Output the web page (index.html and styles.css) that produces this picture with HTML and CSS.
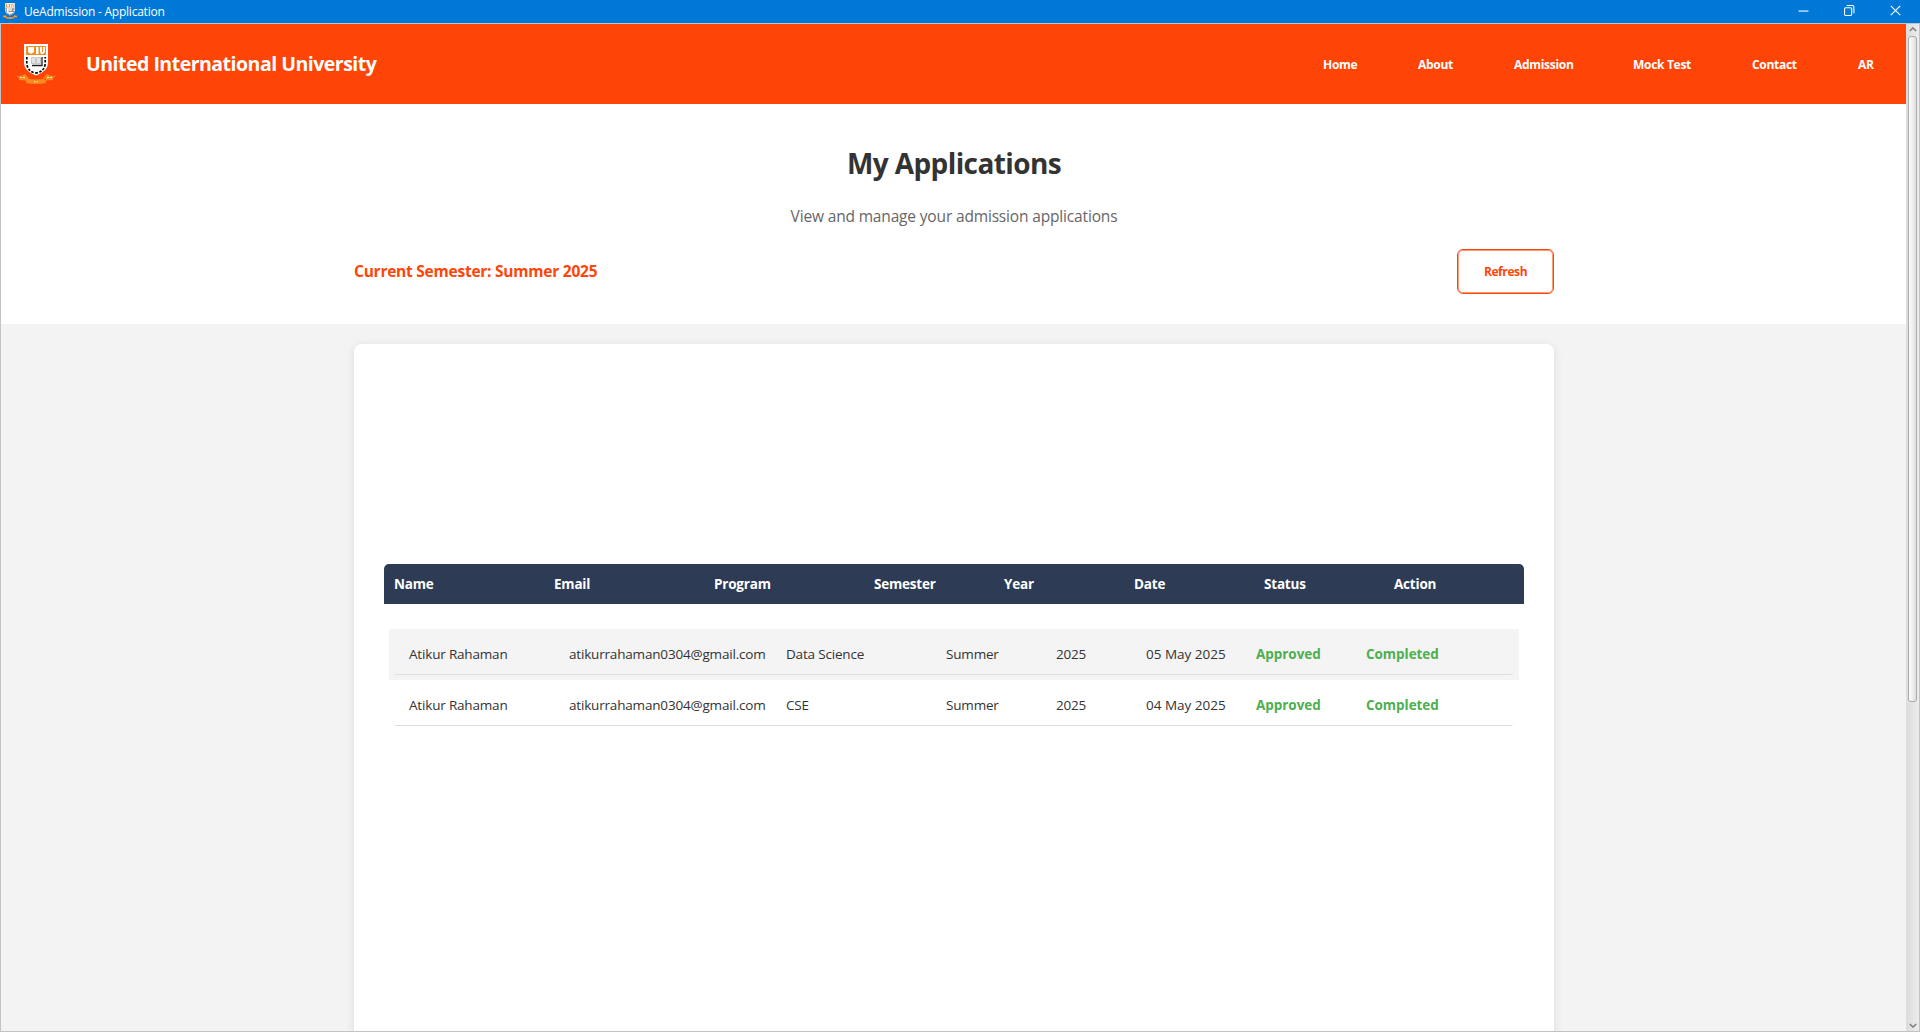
FILE: index.html
```
<!DOCTYPE html>
<html lang="en">
<head>
<meta charset="utf-8">
<title>UeAdmission - Application</title>
<link rel="stylesheet" href="styles.css">
</head>
<body>
<svg width="0" height="0" class="defs">
  <symbol id="crest" viewBox="0 0 40 40">
    <path fill="#fff" d="M8 0h24v19q0 8-12 12.500Q8 27 8 19z"/>
    <path fill="#f68b1f" d="M10 2h20v9H10z"/>
    <path fill="#fff" d="M12 3h6v5l-3 2-3-2zM20 3h2.500v7H20zM24 3h2v5h1V3h2v5l-2 2h-2l-1-2z"/>
    <path fill="#e4e4e4" stroke="#bbb" stroke-width=".8" d="M15.500 13.500h4v6h-4zM20.500 13.500h4v6h-4z"/>
    <path fill="none" stroke="#222" stroke-width="1.300" d="M16 21.500h10V13"/>
    <path fill="none" stroke="#000" stroke-width="1.700" stroke-dasharray="2.500 1.500" d="M10.800 13v7q1.200 8 9.200 9 8-1 9.200-9v-7"/>
    <path fill="#f68b1f" d="M0 31.500q5 1.500 9-1.500l4 5-4 1.500-6-.500v-2zM40 31.500q-5 1.500-9-1.500l-4 5 4 1.500 6-.500v-2zM10 34.500q10 2 20 0v4.500q-10 2-20 0z"/>
    <path fill="none" stroke="#ffe6c4" stroke-dasharray="2 1" d="M4 33.500h5M31 33.500h5M18 37.800h4"/>
  </symbol>
</svg>
<div class="window">
  <div class="titlebar">
    <svg class="app-icon"><use href="#crest"/></svg>
    <span class="app-title">UeAdmission - Application</span>
    <div class="controls">
      <svg viewBox="0 0 10 10"><path d="M.5 5.500h9"/></svg>
      <svg viewBox="0 0 10 10"><rect x=".5" y="2.500" width="6.500" height="7" rx="1"/><path d="M2.500 .5h5a1.500 1.500 0 0 1 1.500 1.500v5.500"/></svg>
      <svg viewBox="0 0 10 10"><path d="M.7 .7l8.600 8.600M9.300 .7L.7 9.300"/></svg>
    </div>
  </div>
  <div class="client">
    <div class="page">
      <header class="header">
        <svg class="logo"><use href="#crest"/></svg>
        <span class="brand">United International University</span>
        <nav class="nav">
          <a class="w-home">Home</a><a class="w-about">About</a><a class="w-admission">Admission</a><a class="w-mock">Mock Test</a><a class="w-contact">Contact</a><a class="w-lang">AR</a>
        </nav>
      </header>
      <section class="hero">
        <h1>My Applications</h1>
        <p class="subtitle">View and manage your admission applications</p>
        <div class="toolbar">
          <span class="semester">Current Semester: Summer 2025</span>
          <button class="refresh">Refresh</button>
        </div>
      </section>
      <main class="content">
        <div class="card">
          <div class="thead">
            <span>Name</span><span>Email</span><span>Program</span><span>Semester</span><span>Year</span><span>Date</span><span>Status</span><span>Action</span>
          </div>
          <div class="rows">
            <div class="row shaded"><div class="cells">
              <span>Atikur Rahaman</span><span>atikurrahaman0304@gmail.com</span><span>Data Science</span><span>Summer</span><span>2025</span><span class="date">05 May 2025</span><span class="ok">Approved</span><span class="ok">Completed</span>
            </div></div>
            <div class="row"><div class="cells">
              <span>Atikur Rahaman</span><span>atikurrahaman0304@gmail.com</span><span>CSE</span><span>Summer</span><span>2025</span><span class="date">04 May 2025</span><span class="ok">Approved</span><span class="ok">Completed</span>
            </div></div>
          </div>
        </div>
      </main>
    </div>
    <div class="scrollbar">
      <svg class="arrow" viewBox="0 0 8 5"><path d="M.8 4L4 1l3.200 3"/></svg>
      <div class="thumb"></div>
      <svg class="arrow down" viewBox="0 0 8 5"><path d="M.8 1L4 4l3.200-3"/></svg>
    </div>
  </div>
</div>
</body>
</html>
```
FILE: styles.css
```
* { box-sizing: border-box; }
body { margin: 0; font-family: "Open Sans", "Noto Sans", sans-serif; color: #333; overflow: hidden; }
.defs { display: block; height: 0; }
.window { height: 1032px; display: flex; flex-direction: column; overflow: hidden; }

.titlebar { height: 23px; flex: none; background: #0078d7; color: #fff; display: flex; align-items: center; padding-left: 2px; }
.app-icon { width: 16px; height: 16px; margin-top: -1px; }
.app-title { font-size: 12px; letter-spacing: -.23px; margin-left: 6px; line-height: 22px; }
.controls { margin-left: auto; display: flex; gap: 35px; padding-right: 19px; margin-top: -3px; }
.controls svg { width: 11px; height: 11px; fill: none; stroke: #fff; stroke-width: 1; }

.client { flex: 1; min-height: 0; display: flex; border: 1px solid #c3c3c3; }
.page { flex: 1; min-width: 0; display: flex; flex-direction: column; overflow: hidden; }

.header { height: 80px; flex: none; background: #fe4507; color: #fff; display: flex; align-items: center; padding: 0 30px 0 15px; }
.logo { width: 40px; height: 40px; }
.brand { font-size: 19.5px; font-weight: 700; letter-spacing: -.5px; margin: -2px 0 0 30px; }
.nav { margin-left: auto; display: flex; gap: 60px; font-size: 12px; font-weight: 700; letter-spacing: -.3px; white-space: nowrap; padding-top: 1px; }
.w-home { width: 35px; }
.w-about { width: 36px; }
.w-admission, .w-mock { width: 59px; }
.w-contact { width: 46px; }
.w-lang { width: 18px; }

.hero { height: 220px; flex: none; background: #fff; padding: 39px 352px 0 353px; text-align: center; }
h1 { margin: 0; font-size: 28px; line-height: 40px; font-weight: 700; letter-spacing: -.6px; }
.subtitle { margin: 21px 0 0; font-size: 15.5px; line-height: 24px; letter-spacing: -.16px; color: #666; }
.toolbar { display: flex; justify-content: space-between; align-items: center; margin-top: 21px; height: 45px; }
.semester { font-size: 15.5px; font-weight: 700; letter-spacing: -.24px; color: #ff4508; margin-top: -1px; }
.refresh { width: 97px; height: 45px; border: 1px solid #ff4508; box-shadow: inset 0 0 0 1px #ff9a76; border-radius: 6px; background: #fff; color: #ff4508; font: 700 12px "Open Sans", sans-serif; letter-spacing: -.4px; padding: 0; }

.content { flex: 1; min-height: 0; background: #f3f3f3; padding: 20px 352px 0 353px; }
.card { height: 720px; background: #fff; border-radius: 8px; box-shadow: 0 2px 10px rgba(0,0,0,.1); padding: 220px 30px 0; }
.thead { height: 40px; background: #2e3b55; color: #fff; border-radius: 5px 5px 0 0; display: grid; grid-template-columns: 160px 160px 160px 130px 130px 130px 130px 1fr; align-items: center; padding-left: 10px; font-size: 13.5px; font-weight: 700; letter-spacing: -.2px; }
.rows { padding: 25px 5px 0; }
.row { height: 51px; padding: 0 6px 0 5px; }
.shaded { background: #f4f4f4; }
.cells { height: 46px; border-bottom: 1px solid #ddd; border-radius: 0 0 3px 3px; display: grid; grid-template-columns: 160px 217px 160px 110px 90px 110px 110px 1fr; align-items: center; padding: 5px 0 0 15px; font-size: 13.5px; letter-spacing: -.18px; white-space: nowrap; }
.date { letter-spacing: 0; }
.ok { color: #4caf50; font-weight: 700; letter-spacing: -.05px; }

.scrollbar { width: 13px; flex: none; background: linear-gradient(90deg, #dcdcdc, #ececec); display: flex; flex-direction: column; align-items: center; padding: 3px 0; }
.arrow { width: 8px; height: 5px; fill: none; stroke: #777; stroke-width: 1.3; }
.thumb { width: 9px; height: 666px; margin-top: 4px; border: 1px solid #aaa; border-radius: 3px; background: linear-gradient(90deg, #fdfdfd, #dedede); }
.down { margin-top: auto; }
```
